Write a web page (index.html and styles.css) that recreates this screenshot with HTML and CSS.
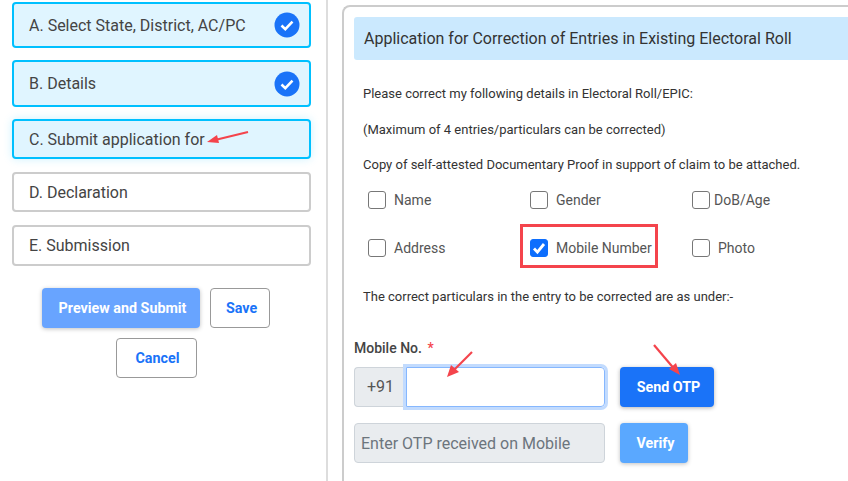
FILE: index.html
```html
<!DOCTYPE html>
<html lang="en">
<head>
    <meta charset="UTF-8">
    <title>Correction of Entries</title>
    <link rel="stylesheet" href="styles.css">
</head>
<body>
    <div class="page">
        <aside class="sidebar">
            <div class="step active step-a">
                <span>A. Select State, District, AC/PC</span>
                <svg class="tick" viewBox="0 0 26 26"><circle cx="13" cy="13" r="12.5" fill="#1a73f8"/><path d="M7.5 13.5l3.8 3.6 7.2-7.4" fill="none" stroke="#fff" stroke-width="2.6"/></svg>
            </div>
            <div class="step active step-b">
                <span>B. Details</span>
                <svg class="tick" viewBox="0 0 26 26"><circle cx="13" cy="13" r="12.5" fill="#1a73f8"/><path d="M7.5 13.5l3.8 3.6 7.2-7.4" fill="none" stroke="#fff" stroke-width="2.6"/></svg>
            </div>
            <div class="step active current"><span>C. Submit application for</span></div>
            <div class="step"><span>D. Declaration</span></div>
            <div class="step step-e"><span>E. Submission</span></div>
            <div class="actions">
                <button class="btn btn-preview">Preview and Submit</button>
                <button class="btn btn-outline btn-save">Save</button>
                <button class="btn btn-outline btn-cancel">Cancel</button>
            </div>
        </aside>
        <main class="panel">
            <div class="panel-card">
                <h1 class="panel-title">Application for Correction of Entries in Existing Electoral Roll</h1>
                <div class="notes">
                    <p class="note">Please correct my following details in Electoral Roll/EPIC:</p>
                    <p class="note">(Maximum of 4 entries/particulars can be corrected)</p>
                    <p class="note">Copy of self-attested Documentary Proof in support of claim to be attached.</p>
                </div>
                <div class="options">
                    <label class="option"><span class="box"></span>Name</label>
                    <label class="option"><span class="box"></span>Gender</label>
                    <label class="option tight"><span class="box"></span>DoB/Age</label>
                    <label class="option"><span class="box"></span>Address</label>
                    <label class="option marked"><span class="box checked"><svg viewBox="0 0 18 18"><path d="M4 9.5l3.4 3.6L14 5" fill="none" stroke="#fff" stroke-width="2.8"/></svg></span>Mobile Number</label>
                    <label class="option"><span class="box"></span>Photo</label>
                </div>
                <p class="note under">The correct particulars in the entry to be corrected are as under:-</p>
                <div class="field-label">Mobile No. <span class="req">*</span></div>
                <div class="field-row">
                    <div class="input-group">
                        <span class="prefix">+91</span>
                        <span class="input focus"></span>
                    </div>
                    <button class="btn btn-otp">Send OTP</button>
                </div>
                <div class="field-row second">
                    <span class="input disabled">Enter OTP received on Mobile</span>
                    <button class="btn btn-verify">Verify</button>
                </div>
            </div>
        </main>
    </div>
    <!-- red annotation arrows drawn on top of the screenshot -->
    <svg class="arrows" viewBox="0 0 848 481">
        <g fill="none" stroke="#f4444c" stroke-width="2.2">
            <path d="M248 132L215 140"/>
            <path d="M472 352L451 373"/>
            <path d="M654 345L676 371"/>
        </g>
        <g fill="#f4444c">
            <path d="M207 142l10-7 2 8z"/>
            <path d="M447 377l4-12 8 7z"/>
            <path d="M680 375l-11-6 7-6z"/>
        </g>
    </svg>
</body>
</html>
```

FILE: styles.css
```css
* {
    box-sizing: border-box;
}
html, body {
    margin: 0;
    height: 100%;
    overflow: hidden;
    background: #fff;
}
body {
    font-family: Roboto, "Liberation Sans", sans-serif;
    color: #444;
}
.page {
    display: flex;
    height: 481px;
}
.sidebar {
    width: 328px;
    flex: none;
    padding: 2px 15px 0 12px;
    border-right: 2px solid #ddd;
}
.step {
    display: flex;
    align-items: center;
    justify-content: space-between;
    height: 40px;
    margin-bottom: 13px;
    padding: 0 9px 0 15px;
    border: 2px solid #ccc;
    border-radius: 4px;
    font-size: 16px;
    color: #444;
}
.step.active {
    background: #e0f5ff;
    border-color: #00c0ff;
}
.step-a {
    height: 46px;
    margin-bottom: 12px;
}
.step-b {
    height: 47px;
    margin-bottom: 12px;
}
.step-e {
    height: 41px;
}
.step.current {
    box-shadow: 0 0 10px rgba(0, 192, 255, .2);
}
.tick {
    width: 26px;
    height: 26px;
}
.actions {
    display: flex;
    flex-wrap: wrap;
    justify-content: center;
    gap: 10px;
    margin-top: 22px;
    padding-right: 11px;
}
.btn {
    height: 40px;
    border: 1px solid transparent;
    border-radius: 4px;
    font-family: inherit;
    font-size: 14.3px;
    font-weight: 700;
    color: #fff;
    padding: 0 0 0 3px;
}
.btn-preview {
    width: 158px;
    background: #68a4ff;
    box-shadow: 0 1px 4px rgba(0, 0, 0, .25);
}
.btn-outline {
    background: #fff;
    border-color: #999;
    color: #1a73f8;
}
.btn-save {
    width: 60px;
}
.btn-cancel {
    width: 81px;
}
.panel {
    flex: 1;
    min-width: 0;
    padding: 5px 0 0 14px;
}
.panel-card {
    height: 500px;
    width: 530px;
    padding: 10px 0 0 10px;
    border: 2px solid #ccc;
    border-right: 0;
    border-radius: 8px 0 0 0;
}
.panel-title {
    margin: 0;
    height: 43px;
    line-height: 43px;
    padding-left: 10px;
    background: #cbe9fe;
    border-radius: 3px 0 0 3px;
    font-size: 16px;
    font-weight: 400;
    color: #333;
}
.notes {
    display: flex;
    flex-direction: column;
    gap: 11.5px;
    margin: 22px 0 -1px;
}
.note {
    margin: 0 0 0 9px;
    line-height: 24px;
    font-size: 13px;
    color: #333;
}
.options {
    display: grid;
    grid-template-columns: 162px 162px 1fr;
    grid-auto-rows: 48px;
    margin-left: 14px;
}
.option {
    display: flex;
    align-items: center;
    gap: 8px;
    font-size: 14px;
    color: #555;
}
.box {
    width: 18px;
    height: 18px;
    flex: none;
    border: 1px solid #777;
    border-radius: 3px;
    background: #fff;
}
.box.checked {
    background: #0d6efd;
    border-color: #0d6efd;
}
.box.checked svg {
    display: block;
    width: 18px;
    height: 18px;
    margin: -1px;
}
.option.tight {
    gap: 4px;
}
.option.marked {
    position: relative;
}
.option.marked::after {
    content: "";
    box-sizing: border-box;
    position: absolute;
    left: -10px;
    top: 0;
    width: 138px;
    height: 44px;
    border: 3px solid #f4444c;
}
.note.under {
    margin-top: 13px;
}
.field-label {
    margin-top: 29px;
    font-size: 14px;
    font-weight: 500;
    line-height: 20px;
    color: #444;
}
.req {
    margin-left: 2px;
    color: #f4444c;
}
.field-row {
    display: flex;
    gap: 15px;
    margin-top: 9px;
}
.field-row.second {
    margin-top: 16px;
}
.input-group {
    display: flex;
    width: 251px;
}
.prefix {
    width: 52px;
    height: 40px;
    line-height: 38px;
    text-align: center;
    background: #e9ecef;
    border: 1px solid #ced4da;
    border-right: 0;
    border-radius: 4px 0 0 4px;
    font-size: 16px;
    color: #555;
}
.input {
    display: block;
    height: 40px;
    border: 1px solid #ced4da;
    border-radius: 4px;
    font-size: 16px;
    line-height: 38px;
}
.input.focus {
    flex: 1;
    border-color: #86b7fe;
    border-radius: 0 4px 4px 0;
    box-shadow: 0 0 0 3px #c2dbfe;
}
.input.disabled {
    width: 251px;
    padding: 1px 0 0 6px;
    background: #e9ecef;
    color: #6c757d;
}
.btn-otp {
    width: 94px;
    background: #1a73f8;
    box-shadow: 0 1px 4px rgba(0, 0, 0, .3);
}
.btn-verify {
    width: 68px;
    background: #5aa8ff;
    box-shadow: 0 1px 4px rgba(0, 0, 0, .25);
}
.arrows {
    position: absolute;
    left: 0;
    top: 0;
    width: 848px;
    height: 481px;
    pointer-events: none;
}
```
